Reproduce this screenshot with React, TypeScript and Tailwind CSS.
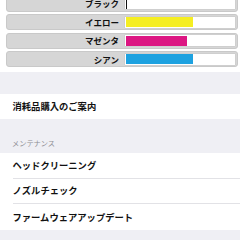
import React from "react";

const inks = [
  { name: "ブラック", color: "#111111", width: 1 },
  { name: "イエロー", color: "#f5ee22", width: 67 },
  { name: "マゼンタ", color: "#dc1682", width: 61 },
  { name: "シアン", color: "#1ea2e0", width: 67 },
];

const font = { fontFamily: '"Noto Sans CJK JP", "Noto Sans", sans-serif' };

export default function App() {
  return (
    <div className="w-[240px] h-[240px] overflow-hidden bg-white" style={font}>
      <div className="flex flex-col gap-[2.5px] mt-[-4.5px] h-[76.5px] pl-[6px]">
        {inks.map((ink) => (
          <div
            key={ink.name}
            className="flex items-center w-[232px] h-[16px] shrink-0 rounded-[3px] bg-[#d6d6d6] border border-[#c9c9c9]"
          >
            <div className="w-[112px] text-right text-[8.5px] font-bold leading-none text-[#111]">
              {ink.name}
            </div>
            <div className="ml-[5px] w-[112px] h-[13px] bg-white border border-[#cfcfcf] rounded-[1px] flex items-center pl-[1px]">
              <div className="h-[10px]" style={{ width: ink.width, backgroundColor: ink.color }} />
            </div>
          </div>
        ))}
      </div>
      <div className="h-[22px] bg-[#efeff4]" />
      <div className="h-[25px] bg-white flex items-center pl-[12.5px] text-[9.3px] font-semibold text-[#111] leading-none">
        消耗品購入のご案内
      </div>
      <div className="h-[34px] bg-[#efeff4] flex items-end pb-[6px] pl-[12px] text-[7.2px] text-[#8e8e93] leading-none">
        メンテナンス
      </div>
      <div className="bg-white flex flex-col">
        {["ヘッドクリーニング", "ノズルチェック", "ファームウェアアップデート"].map((t, i) => (
          <div key={t} className="pl-[12.5px]">
            <div
              className={
                "h-[25.7px] flex items-center text-[9.3px] font-semibold text-[#111] leading-none " +
                (i < 2 ? "border-b border-[#e2e2e6]" : "")
              }
            >
              {t}
            </div>
          </div>
        ))}
      </div>
      <div className="h-[20px] bg-[#efeff4]" />
    </div>
  );
}
